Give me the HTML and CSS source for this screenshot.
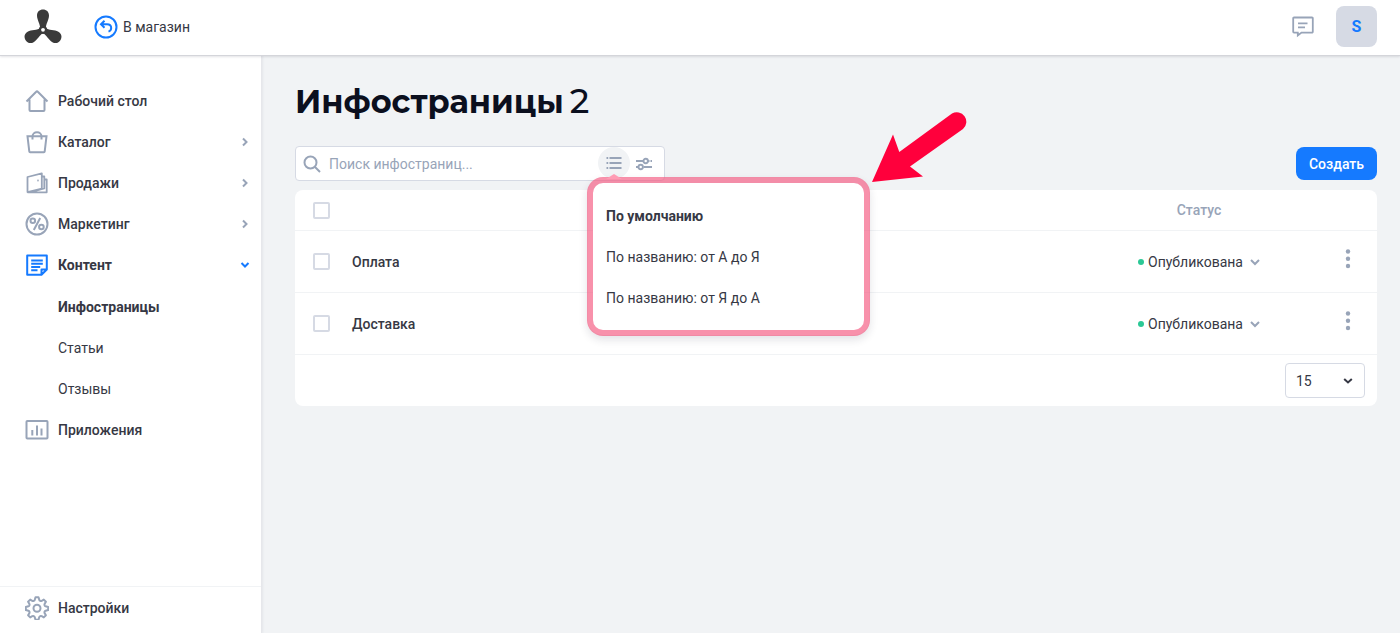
FILE: index.html
```html
<!DOCTYPE html>
<html lang="ru">
<head>
<meta charset="utf-8">
<meta name="viewport" content="width=device-width, initial-scale=1">
<title>Инфостраницы</title>
<link rel="stylesheet" href="styles.css">
</head>
<body>
<div class="app">
  <header class="topbar">
    <a class="logo" href="#" aria-label="Главная">
      <svg width="38" height="36" viewBox="0 0 38 36" fill="#3a3a3a">
        <path id="blade" d="M16.400 20.500C16.400 15 13 11 13 6.500C13 2.800 15.600.5 19 .5S25 2.800 25 6.500C25 11 21.600 15 21.600 20.500Z"/>
        <use href="#blade" transform="rotate(120 19 20.800)"/>
        <use href="#blade" transform="rotate(240 19 20.800)"/>
        <circle cx="19" cy="20.800" r="4.200"/>
        <circle cx="19" cy="20.800" r="1.900" fill="#fff"/>
      </svg>
    </a>
    <a class="store-link" href="#">
      <svg width="24" height="24" viewBox="0 0 24 24" fill="none" stroke="#157aff" stroke-width="2">
        <circle cx="12" cy="12" r="10.500"/>
        <path d="M10.500 5.800 7 9.300l3.500 3.500M7 9.300h6c2.500 0 4.200 1.500 4.200 3.700 0 1.700-1 3-2.700 3.600"/>
      </svg>
      В магазин
    </a>
    <div class="topbar-actions">
      <button class="icon-button" type="button" aria-label="Сообщения">
        <svg width="22" height="22" viewBox="0 0 22 22" fill="none" stroke="#98a4b8" stroke-width="1.800">
          <path d="M2 1.500h18a.8.8 0 0 1 .8.800v13.500a.8.8 0 0 1-.8.800H9.500L5.800 19.500v-2.900H2a.8.8 0 0 1-.8-.8V2.300a.8.8 0 0 1 .8-.8ZM6 7.400h9.500M6 11.300h7"/>
        </svg>
      </button>
      <button class="avatar" type="button">S</button>
    </div>
  </header>

  <div class="body">
    <aside class="sidebar">
      <nav class="nav">
        <a class="nav-item" href="#">
          <svg class="nav-icon" viewBox="0 0 24 24"><path d="M4.500 10.500V21a1 1 0 0 0 1 1h13a1 1 0 0 0 1-1V10.500M1.500 12.500 11.200 2.700a1.100 1.100 0 0 1 1.600 0L22.500 12.500" stroke-linejoin="round"/></svg>
          <span>Рабочий стол</span>
        </a>
        <a class="nav-item" href="#">
          <svg class="nav-icon" viewBox="0 0 24 24"><path d="M2.500 6.300h19l-1.800 15.200a.8.8 0 0 1-.8.700H5.100a.8.8 0 0 1-.8-.7ZM7.500 9.500V6.500c0-2.500 2-4.200 4.500-4.200s4.500 1.700 4.500 4.200v3"/></svg>
          <span>Каталог</span>
          <svg class="chevron" viewBox="0 0 10 10"><path d="m3 1.500 3.500 3.500L3 8.500"/></svg>
        </a>
        <a class="nav-item" href="#">
          <svg class="nav-icon" viewBox="0 0 24 24"><path d="M2.500 6 16.800 2.300V17.500L2.500 21ZM17 5.500h2.300V17.500L6.500 21M19 8.500h2.700V21.300H2.500" stroke-linejoin="round" stroke-width="1.800"/><circle cx="13" cy="9.500" r=".3" stroke-width="1.200"/></svg>
          <span>Продажи</span>
          <svg class="chevron" viewBox="0 0 10 10"><path d="m3 1.500 3.500 3.500L3 8.500"/></svg>
        </a>
        <a class="nav-item" href="#">
          <svg class="nav-icon" viewBox="0 0 24 24"><circle cx="12" cy="12" r="10.500"/><circle cx="7.800" cy="8.800" r="2.300"/><circle cx="16.400" cy="15" r="2.300"/><path d="M15.200 6 8.800 18"/></svg>
          <span>Маркетинг</span>
          <svg class="chevron" viewBox="0 0 10 10"><path d="m3 1.500 3.500 3.500L3 8.500"/></svg>
        </a>
        <a class="nav-item nav-item-open" href="#">
          <svg class="nav-icon" viewBox="0 0 24 24"><path d="M2.200 2.500h19.600v14L16.500 21.800H2.200ZM22 16.500h-5.500v5.500M6.200 7.500h11.600M6.200 10.800h11.600M6.200 14h9M6.200 17.300h6.300" stroke-linejoin="round"/></svg>
          <span>Контент</span>
          <svg class="chevron" viewBox="0 0 10 10"><path d="M1.500 3 5 6.500 8.500 3"/></svg>
        </a>
        <div class="subnav">
          <a class="nav-item nav-sub nav-current" href="#">Инфостраницы</a>
          <a class="nav-item nav-sub" href="#">Статьи</a>
          <a class="nav-item nav-sub" href="#">Отзывы</a>
        </div>
        <a class="nav-item" href="#">
          <svg class="nav-icon" viewBox="0 0 24 24"><rect x="1.500" y="3" width="21" height="17.500" rx=".8"/><path d="M7.300 17.500v-5.500M12 17.500v-10M16.500 17.500v-7"/></svg>
          <span>Приложения</span>
        </a>
      </nav>
      <a class="nav-item settings" href="#">
        <svg class="nav-icon" viewBox="0 0 24 24"><path d="M10.500 1.300h3l.8 2.600q.2.700.9 1 .8.300 1.500-.1l2.100-1.200 2.100 2.100-1.200 2.100q-.4.700-.1 1.500.3.700 1 .9l2.600.8v3l-2.600.8q-.7.200-1 .9-.3.800.1 1.500l1.200 2.100-2.100 2.100-2.100-1.200q-.7-.4-1.500-.1-.7.300-.9 1l-.8 2.600h-3l-.8-2.600q-.2-.7-.9-1-.8-.3-1.500.1l-2.100 1.200-2.100-2.100 1.200-2.100q.4-.7.1-1.500-.3-.7-1-.9l-2.600-.8v-3l2.600-.8q.7-.2 1-.9.300-.8-.1-1.500L3.100 5.700l2.100-2.100 2.100 1.200q.7.400 1.500.1.700-.3.900-1Z" stroke-linejoin="round"/><circle cx="12" cy="12.200" r="3.500"/></svg>
        <span>Настройки</span>
      </a>
    </aside>

    <main class="content">
      <h1 class="title">Инфостраницы <span class="count">2</span></h1>
      <div class="toolbar">
        <div class="search">
          <svg class="search-icon" width="18" height="18" viewBox="0 0 18 18" fill="none" stroke="#98a4b8" stroke-width="2"><circle cx="7.500" cy="7.500" r="6"/><path d="m12 12 5 5"/></svg>
          <input class="search-input" type="text" placeholder="Поиск инфостраниц..." aria-label="Поиск инфостраниц">
          <div class="sort">
            <button class="round-button sort-button" type="button" aria-label="Сортировка">
              <svg width="16" height="14" viewBox="0 0 16 14" stroke="#98a4b8" stroke-width="1.900"><path d="M3.500 2H15.500M3.500 7H15.500M3.500 12H15.500M.5 2H2.200M.5 7H2.200M.5 12H2.200"/></svg>
            </button>
            <div class="sort-popover">
              <button class="sort-option sort-selected" type="button">По умолчанию</button>
              <button class="sort-option" type="button">По названию: от А до Я</button>
              <button class="sort-option" type="button">По названию: от Я до А</button>
              <svg class="pointer-arrow" width="96" height="73" viewBox="0 0 96 73" fill="#ff003c"><path d="M0 72 21 24.500 27.300 42 80 3.600A9.500 9.500 0 0 1 91 19L38 56.500 51 66.500Z"/></svg>
            </div>
          </div>
          <button class="round-button filter-button" type="button" aria-label="Фильтры">
            <svg width="18" height="14" viewBox="0 0 18 14" fill="none" stroke="#98a4b8" stroke-width="1.900"><path d="M1 4h7M13 4h1.500M15.500 4H17M1 10h2M8.500 10H17"/><circle cx="10.700" cy="4" r="2.200"/><circle cx="5.700" cy="10" r="2.200"/></svg>
          </button>
        </div>
        <button class="create" type="button">Создать</button>
      </div>

      <section class="card">
        <table class="pages">
          <colgroup><col class="col-check"><col><col class="col-status"><col class="col-menu"></colgroup>
          <thead>
            <tr>
              <th><input class="check" type="checkbox" aria-label="Выбрать все"></th>
              <th></th>
              <th class="status-cell">Статус</th>
              <th></th>
            </tr>
          </thead>
          <tbody>
            <tr>
              <td><input class="check" type="checkbox" aria-label="Выбрать: Оплата"></td>
              <td><a class="page-name" href="#">Оплата</a></td>
              <td class="status-cell"><button class="status" type="button"><span class="dot"></span>Опубликована<svg class="chevron" viewBox="0 0 10 10"><path d="M1 3 5 7 9 3"/></svg></button></td>
              <td class="menu-cell"><button class="icon-button" type="button" aria-label="Действия"><svg width="6" height="20" viewBox="0 0 6 20" fill="#98a4b8"><circle cx="3" cy="2.500" r="2.200"/><circle cx="3" cy="9.800" r="2.200"/><circle cx="3" cy="17" r="2.200"/></svg></button></td>
            </tr>
            <tr>
              <td><input class="check" type="checkbox" aria-label="Выбрать: Доставка"></td>
              <td><a class="page-name" href="#">Доставка</a></td>
              <td class="status-cell"><button class="status" type="button"><span class="dot"></span>Опубликована<svg class="chevron" viewBox="0 0 10 10"><path d="M1 3 5 7 9 3"/></svg></button></td>
              <td class="menu-cell"><button class="icon-button" type="button" aria-label="Действия"><svg width="6" height="20" viewBox="0 0 6 20" fill="#98a4b8"><circle cx="3" cy="2.500" r="2.200"/><circle cx="3" cy="9.800" r="2.200"/><circle cx="3" cy="17" r="2.200"/></svg></button></td>
            </tr>
          </tbody>
        </table>
        <div class="card-footer">
          <label class="per-page">
            <select aria-label="Строк на странице"><option>15</option><option>30</option></select>
            <svg class="chevron" viewBox="0 0 10 10"><path d="M1.200 3 5 6.500 8.800 3"/></svg>
          </label>
        </div>
      </section>
    </main>
  </div>
</div>
</body>
</html>
```
FILE: styles.css
```css
* {
  box-sizing: border-box;
}

body {
  margin: 0;
  background: #f1f3f5;
  color: #363844;
  font: 14px/20px Roboto, sans-serif;
}

button,
input,
select {
  font: inherit;
  color: inherit;
}

button {
  padding: 0;
  border: 0;
  background: none;
  cursor: pointer;
}

a {
  color: inherit;
  text-decoration: none;
}

svg {
  display: block;
  flex: none;
}

.app {
  display: flex;
  flex-direction: column;
  min-height: 100vh;
}

.topbar {
  display: flex;
  align-items: center;
  height: 56px;
  padding: 0 23px 2px;
  background: #fff;
  border-bottom: 1px solid #d4d5da;
  box-shadow: 0 1px 2px rgba(30, 35, 60, 0.12);
  z-index: 1;
}

.logo {
  margin: 0 32px 0 1px;
}

.store-link {
  display: flex;
  align-items: center;
  gap: 5px;
}

.topbar-actions {
  display: flex;
  align-items: center;
  gap: 22px;
  margin-left: auto;
}

.avatar {
  width: 41px;
  height: 41px;
  border-radius: 8px;
  background: #d6dae4;
  color: #157aff;
  font-size: 16px;
  font-weight: 700;
}

.body {
  display: flex;
  flex: 1;
}

.sidebar {
  display: flex;
  flex-direction: column;
  flex: 0 0 262px;
  background: #fff;
  border-right: 1px solid #e6e7eb;
  box-shadow: 1px 0 2px rgba(30, 35, 60, 0.06);
}

.nav {
  flex: 1;
  padding-top: 24px;
}

.nav-item {
  display: flex;
  align-items: center;
  gap: 9px;
  height: 41px;
  padding: 0 11px 0 25px;
  font-weight: 500;
}

.nav-item .chevron {
  margin-left: auto;
}

.nav-icon {
  width: 24px;
  height: 24px;
  fill: none;
  stroke: #98a4b8;
  stroke-width: 2;
}

.nav-item-open .nav-icon,
.nav-item-open .chevron {
  stroke: #157aff;
}

.subnav {
  padding-top: 1px;
}

.nav-sub {
  padding-left: 58px;
  font-weight: 400;
}

.nav-current,
.nav-item-open {
  font-weight: 700;
}

.settings {
  height: 47px;
  padding-bottom: 5px;
  border-top: 1px solid #f1f3f5;
}

.chevron {
  width: 10px;
  height: 10px;
  fill: none;
  stroke: #98a4b8;
  stroke-width: 2;
}

.content {
  flex: 1;
  min-width: 0;
  padding: 24px 23px 24px 33px;
}

.title {
  display: flex;
  align-items: baseline;
  gap: 6px;
  margin: 0 0 23px;
  color: #0b0f1e;
  font: 700 32px/42px Montserrat, Inter, sans-serif;
}

.count {
  font-size: 34px;
  font-weight: 500;
}

.toolbar {
  display: flex;
  align-items: center;
  justify-content: space-between;
  margin-bottom: 9px;
}

.search {
  display: flex;
  align-items: center;
  flex: 0 1 370px;
  height: 35px;
  padding: 0 6px 0 7px;
  border: 1px solid #d6dae4;
  border-radius: 4px;
  background: #fff;
}

.search-input {
  flex: 1;
  min-width: 0;
  padding: 0 8px;
  border: 0;
  outline: 0;
  background: none;
}

.search-input::placeholder {
  color: #98a4b8;
}

.round-button {
  display: flex;
  align-items: center;
  justify-content: center;
  width: 32px;
  height: 32px;
  border-radius: 50%;
}

.filter-button {
  width: 28px;
}

.sort {
  position: relative;
  margin-bottom: 1px;
}

.sort-button {
  background: #f1f3f5;
}

.sort-popover {
  position: absolute;
  top: 30px;
  left: -11px;
  z-index: 2;
  width: 283px;
  padding: 12px 0;
  border: 6px solid rgba(245, 88, 128, 0.66);
  border-radius: 16px;
  background: #fff;
  background-clip: padding-box;
  box-shadow: 0 4px 8px rgba(30, 35, 60, 0.12);
}

.sort-popover::before {
  content: "";
  position: absolute;
  top: -9px;
  left: 13px;
  border: 8px solid transparent;
  border-top: 0;
  border-bottom: 5px solid #ff9cb4;
}

.sort-option {
  display: block;
  width: 100%;
  height: 41px;
  padding: 0 13px;
  text-align: left;
}

.sort-selected {
  font-weight: 700;
}

.pointer-arrow {
  position: absolute;
  top: -73px;
  left: 279px;
}

.create {
  height: 33px;
  padding: 0 13px;
  border-radius: 8px;
  background: #157aff;
  color: #fff;
  font-weight: 500;
}

.card {
  border-radius: 8px;
  background: #fff;
}

.pages {
  width: 100%;
  border-collapse: separate;
  border-spacing: 0;
  table-layout: fixed;
}

.col-check {
  width: 57px;
}

.col-status {
  width: 240px;
}

.col-menu {
  width: 58px;
}

.pages th,
.pages td {
  height: 62px;
  padding: 0;
  border-bottom: 1px solid #f1f3f5;
  text-align: left;
}

.pages th {
  height: 41px;
  color: #98a4b8;
  font-weight: 500;
}

.pages .status-cell {
  text-align: center;
}

.pages .menu-cell {
  text-align: center;
}

.check {
  display: block;
  width: 17px;
  height: 17px;
  margin: 0 0 0 18px;
  border: 2px solid #d6dae4;
  border-radius: 2px;
  appearance: none;
  background: #fff;
}

.page-name {
  font-weight: 500;
}

.status {
  display: inline-flex;
  align-items: center;
  vertical-align: middle;
}

.status .chevron {
  margin-left: 7px;
}

.dot {
  width: 6px;
  height: 6px;
  margin-right: 4px;
  border-radius: 50%;
  background: #2bc896;
}

.card-footer {
  display: flex;
  justify-content: flex-end;
  padding: 8px 12px;
}

.per-page {
  display: grid;
  align-items: center;
}

.per-page select {
  grid-area: 1 / 1;
  width: 80px;
  height: 35px;
  padding: 0 10px;
  border: 1px solid #d6dae4;
  border-radius: 4px;
  appearance: none;
  background: #fff;
}

.per-page .chevron {
  grid-area: 1 / 1;
  justify-self: end;
  margin-right: 12px;
  stroke: #363844;
  pointer-events: none;
}
```
